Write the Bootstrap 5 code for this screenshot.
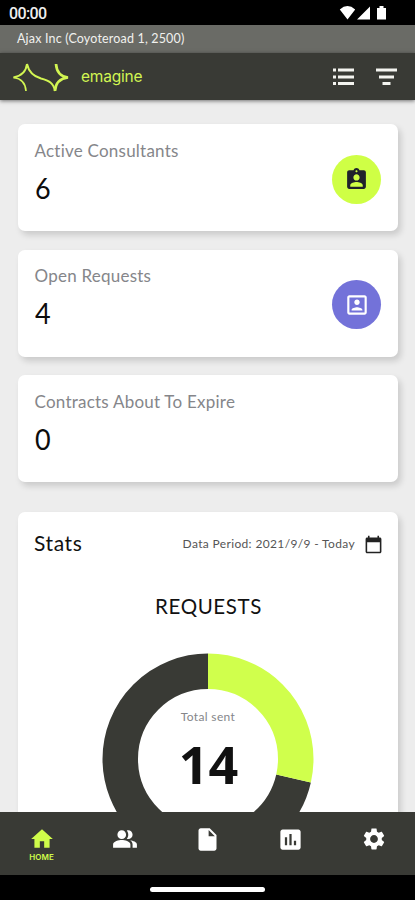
<!DOCTYPE html>
<html lang="en">
<head>
<meta charset="utf-8">
<meta name="viewport" content="width=device-width, initial-scale=1">
<title>emagine</title>
<link href="https://cdn.jsdelivr.net/npm/bootstrap@5.3.0/dist/css/bootstrap.min.css" rel="stylesheet">
<style>
body{font-family:Lato,"Liberation Sans",sans-serif;background:#ededed;color:#111;height:900px;line-height:1}
svg{display:block;flex:none}
.status-bar{height:25px;background:#000;padding:3px 27px 0 9px}
.clock{font:500 16px/22px Roboto,sans-serif;letter-spacing:-.65px;color:#eee}
.site-bar{height:28px;background:#6a6b66;color:#f1f1ee;padding:0 18px 0 17px;font-size:12.5px;letter-spacing:.17px}
.brand-bar{height:47px;background:#393a35;padding:0 18px 0 12px;box-shadow:0 1px 4px #0008;z-index:1;position:relative}
.wordmark{font-family:Inter,sans-serif;font-size:15.5px;color:#d2f552;letter-spacing:-.2px;margin-left:11px;line-height:20px}
.header-tools{gap:22px}
.content{padding:24px 17px 0 18px;min-height:0}
.tile{border:0;border-radius:7px;box-shadow:3px 4px 6px #00000026;background:#fff}
.metric{height:107px;margin-bottom:18.7px;padding:0 17px 0 16.500px}
.metric-label{font-size:17px;line-height:20px;color:#85868a;letter-spacing:.23px;padding-top:16.500px}
.metric-value{font-size:29px;line-height:34px;color:#0c0c0c;margin-top:10px;transform:scaleX(.93);transform-origin:left}
.round-icon{width:49px;height:49px;margin-top:3px}
.lime{background:#cfff45}.violet{background:#7372d9}
.stats{height:400px;margin-top:30px;padding:0 15px 0 16px}
.stats-title{font-size:21px;letter-spacing:.6px;padding-bottom:3px}
.period{font-size:12px;letter-spacing:.35px;color:#555;margin-right:9px}
.stats-head{padding-top:20px;height:44px}
.chart-title{font-size:20.5px;letter-spacing:.6px;line-height:24px;margin-top:38px}
.chart{margin:35px 68px 0;width:212px;height:212px}
.chart text{text-anchor:middle}
.bottom-nav{height:63px;background:#393a35}
.bottom-nav a{width:83px;padding-top:14px;color:#fff}
.bottom-nav a.active{color:#d0fc4a}
.nav-caption{font:600 8px/9px Inter,sans-serif;letter-spacing:.1px;margin-top:1px}
.gesture{height:25px;background:#000}
.pill{width:115px;height:5px;background:#fff;margin-top:4px}
</style>
</head>
<body class="d-flex flex-column overflow-hidden">
<div class="status-bar d-flex justify-content-between flex-shrink-0">
  <span class="clock">00:00</span>
  <svg width="50" height="20" viewBox="0 0 50 20" fill="#fff"><path d="M1.800 6.500Q9.500 -.4 17.200 6.500L9.500 16.500ZM19 16.500L32 3.500V16.500ZM39 5h2.500V3h4v2H48v11.500h-9z"/></svg>
</div>
<div class="site-bar d-flex align-items-center flex-shrink-0">Ajax Inc (Coyoteroad 1, 2500)</div>
<header class="brand-bar d-flex align-items-center flex-shrink-0">
  <svg width="58" height="32" viewBox="0 0 58 32" fill="none" stroke="#d2f552" stroke-width="2"><path d="M14 30C13.500 22 9 17.500 1.500 16.500" stroke-width="1.700"/><path d="M1.500 16.500C9 15 14 11 15 3C17 12 22 15.500 29 17.500C37 19.500 41.500 22 43 30"/><path d="M43 30C43.500 22 48 17.500 56 16.500C48 15.500 44.500 10 44 3" stroke-width="2.700"/></svg>
  <span class="wordmark">emagine</span>
  <div class="header-tools d-flex ms-auto align-items-center">
    <svg width="21" height="18" viewBox="0 0 21 18" fill="#f4f4f0"><path d="M0 .5h3v3H0zM5 .5h16v3H5zM0 7.500h3v3H0zM5 7.500h16v3H5zM0 14h3v3H0zM5 14h16v3H5z"/></svg>
    <svg width="21" height="18" viewBox="0 0 21 18" fill="#f4f4f0"><path d="M0 .5h21v3H0zM3 7.500h15v3H3zM6.500 14h8v3h-8z"/></svg>
  </div>
</header>
<main class="content flex-grow-1 overflow-hidden">
  <section class="tile metric d-flex justify-content-between">
    <div><div class="metric-label">Active Consultants</div><div class="metric-value">6</div></div>
    <div class="round-icon lime rounded-circle d-flex align-items-center justify-content-center align-self-center"><svg width="25" height="25" viewBox="0 0 24 24" fill="#20222c"><path d="M19 3h-4.180C14.400 1.840 13.300 1 12 1s-2.400.84-2.820 2H5c-1.100 0-2 .9-2 2v14c0 1.100.9 2 2 2h14c1.100 0 2-.9 2-2V5c0-1.100-.9-2-2-2zm-7 0c.55 0 1 .45 1 1s-.45 1-1 1-1-.45-1-1 .45-1 1-1zm0 4c1.660 0 3 1.340 3 3s-1.340 3-3 3-3-1.340-3-3 1.340-3 3-3zm6 12H6v-1.400c0-2 4-3.100 6-3.100s6 1.100 6 3.100V19z"/></svg></div>
  </section>
  <section class="tile metric d-flex justify-content-between">
    <div><div class="metric-label">Open Requests</div><div class="metric-value">4</div></div>
    <div class="round-icon violet rounded-circle d-flex align-items-center justify-content-center align-self-center"><svg width="26" height="26" viewBox="0 0 24 24" fill="#fff"><path d="M19 3H5c-1.110 0-2 .9-2 2v14c0 1.100.89 2 2 2h14c1.100 0 2-.9 2-2V5c0-1.100-.9-2-2-2zm0 16H5V5h14v14zm-7-7c1.380 0 2.500-1.120 2.500-2.500S13.380 7 12 7 9.500 8.120 9.500 9.500 10.620 12 12 12zm5 4.500c0-1.670-3.330-2.500-5-2.500s-5 .83-5 2.500v.5h10v-.5z"/></svg></div>
  </section>
  <section class="tile metric">
    <div class="metric-label">Contracts About To Expire</div><div class="metric-value">0</div>
  </section>
  <section class="tile stats">
    <div class="stats-head d-flex align-items-center justify-content-between">
      <span class="stats-title">Stats</span>
      <div class="d-flex align-items-center"><span class="period">Data Period: 2021/9/9 - Today</span>
      <svg width="19" height="19" viewBox="0 0 24 24" fill="#222"><path d="M20 3h-1V1h-2v2H7V1H5v2H4c-1.100 0-2 .9-2 2v16c0 1.100.9 2 2 2h16c1.100 0 2-.9 2-2V5c0-1.100-.9-2-2-2zm0 18H4V9h16v12z"/></svg></div>
    </div>
    <div class="chart-title text-center">REQUESTS</div>
    <svg class="chart" viewBox="0 0 212 212">
      <g fill="none" stroke-width="35.500" transform="rotate(-90 106 106)">
        <circle cx="106" cy="106" r="87.750" stroke="#393a35" pathLength="14" stroke-dasharray="0 4 10"/>
        <circle cx="106" cy="106" r="87.750" stroke="#d0ff4c" pathLength="14" stroke-dasharray="4 10"/>
      </g>
      <text x="106" y="68" font-size="12" letter-spacing=".35" fill="#85868a">Total sent</text>
      <text x="106.500" y="131" font-family="Open Sans" font-weight="700" font-size="52" fill="#111">14</text>
    </svg>
  </section>
</main>
<nav class="bottom-nav d-flex flex-shrink-0">
  <a class="active d-flex flex-column align-items-center text-decoration-none"><svg width="26" height="26" viewBox="0 0 24 24" fill="currentColor"><path d="M10 20v-6h4v6h5v-8h3L12 3 2 12h3v8z"/></svg><span class="nav-caption">HOME</span></a>
  <a class="d-flex flex-column align-items-center"><svg width="26" height="26" viewBox="0 0 24 24" fill="currentColor"><path d="M16.670 13.130C18.040 14.060 19 15.320 19 17v3h4v-3c0-2.180-3.570-3.470-6.330-3.870zM15 12c2.210 0 4-1.790 4-4s-1.790-4-4-4c-.47 0-.91.1-1.330.24C14.500 5.270 15 6.580 15 8s-.5 2.730-1.330 3.760c.42.14.86.24 1.330.24zM9 12c2.210 0 4-1.790 4-4s-1.790-4-4-4-4 1.790-4 4 1.790 4 4 4zm0 1c-2.670 0-8 1.340-8 4v3h16v-3c0-2.660-5.330-4-8-4z"/></svg></a>
  <a class="d-flex flex-column align-items-center"><svg width="27" height="27" viewBox="0 0 24 24" fill="currentColor"><path d="M6 2c-1.100 0-2 .9-2 2v16c0 1.100.9 2 2 2h12c1.100 0 2-.9 2-2V8l-6-6H6zm7 7V3.500L18.500 9H13z"/></svg></a>
  <a class="d-flex flex-column align-items-center"><svg width="27" height="27" viewBox="0 0 24 24" fill="currentColor"><path d="M19 3H5c-1.100 0-2 .9-2 2v14c0 1.100.9 2 2 2h14c1.100 0 2-.9 2-2V5c0-1.100-.9-2-2-2zM9 17H7v-7h2v7zm4 0h-2V7h2v10zm4 0h-2v-4h2v4z"/></svg></a>
  <a class="d-flex flex-column align-items-center"><svg width="26" height="26" viewBox="0 0 24 24" fill="currentColor"><path d="M19.140 12.940c.04-.3.06-.61.06-.94s-.02-.64-.07-.94l2.030-1.580c.18-.14.23-.41.12-.61l-1.920-3.320c-.12-.22-.37-.29-.59-.22l-2.390.96c-.5-.38-1.030-.7-1.620-.94l-.36-2.540c-.04-.24-.24-.41-.48-.41h-3.840c-.24 0-.43.17-.47.41l-.36 2.540c-.59.24-1.130.57-1.620.94l-2.390-.96c-.22-.08-.47 0-.59.22L2.740 8.870c-.12.21-.08.47.12.61l2.030 1.580c-.05.3-.09.63-.09.94s.02.64.07.94l-2.030 1.580c-.18.14-.23.41-.12.61l1.920 3.320c.12.22.37.29.59.22l2.390-.96c.5.38 1.030.7 1.620.94l.36 2.540c.05.24.24.41.48.41h3.840c.24 0 .44-.17.47-.41l.36-2.540c.59-.24 1.130-.56 1.620-.94l2.390.96c.22.08.47 0 .59-.22l1.920-3.320c.12-.22.07-.47-.12-.61l-2.010-1.580zM12 15.600c-1.980 0-3.600-1.620-3.600-3.600s1.620-3.600 3.600-3.600 3.600 1.620 3.600 3.600-1.620 3.600-3.600 3.600z"/></svg></a>
</nav>
<div class="gesture d-flex align-items-center justify-content-center flex-shrink-0"><div class="pill rounded-pill"></div></div>
<script src="https://cdn.jsdelivr.net/npm/bootstrap@5.3.0/dist/js/bootstrap.bundle.min.js"></script>
</body>
</html>
